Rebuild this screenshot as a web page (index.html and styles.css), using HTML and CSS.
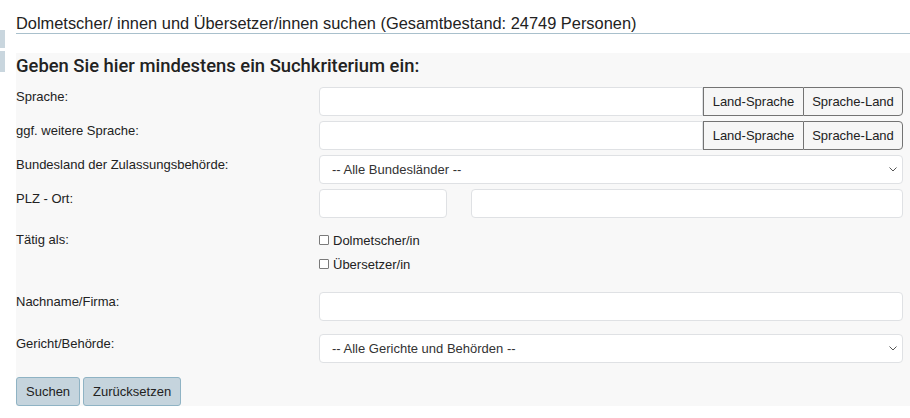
FILE: index.html
```html
<!DOCTYPE html>
<html lang="de">
<head>
<meta charset="utf-8">
<title>Dolmetscher/innen und Übersetzer/innen suchen</title>
<link rel="stylesheet" href="styles.css">
</head>
<body>
<div class="sidebar-stub" aria-hidden="true">
  <span class="stub stub-a"></span>
  <span class="stub stub-b"></span>
</div>
<header class="page-head">
  <h1 class="page-title">Dolmetscher/ innen und Übersetzer/innen suchen (Gesamtbestand: 24749 Personen)</h1>
</header>
<form class="search-panel">
  <h2 class="panel-title">Geben Sie hier mindestens ein Suchkriterium ein:</h2>

  <div class="row">
    <label class="row-label">Sprache:</label>
    <div class="input-group">
      <input class="field grow" type="text">
      <button type="button" class="btn-add">Land-Sprache</button>
      <button type="button" class="btn-add last">Sprache-Land</button>
    </div>
  </div>

  <div class="row">
    <label class="row-label">ggf. weitere Sprache:</label>
    <div class="input-group">
      <input class="field grow" type="text">
      <button type="button" class="btn-add">Land-Sprache</button>
      <button type="button" class="btn-add last">Sprache-Land</button>
    </div>
  </div>

  <div class="row">
    <label class="row-label">Bundesland der Zulassungsbehörde:</label>
    <div class="select-wrap">
      <select class="field select"><option>-- Alle Bundesländer --</option></select>
      <svg class="chev" viewBox="0 0 8 5" width="8" height="5"><path d="M0.5 0.5 L4 4 L7.5 0.5" fill="none" stroke="#555" stroke-width="1"/></svg>
    </div>
  </div>

  <div class="row row-plz">
    <label class="row-label">PLZ - Ort:</label>
    <div class="plz-group">
      <input class="field plz" type="text">
      <input class="field ort" type="text">
    </div>
  </div>

  <div class="row row-check">
    <span class="row-label check-label">Tätig als:</span>
    <div class="checks">
      <label class="check"><input type="checkbox" class="box"> Dolmetscher/in</label>
      <label class="check"><input type="checkbox" class="box"> Übersetzer/in</label>
    </div>
  </div>

  <div class="row row-wide">
    <label class="row-label">Nachname/Firma:</label>
    <input class="field" type="text">
  </div>

  <div class="row row-wide row-last">
    <label class="row-label">Gericht/Behörde:</label>
    <div class="select-wrap">
      <select class="field select"><option>-- Alle Gerichte und Behörden --</option></select>
      <svg class="chev" viewBox="0 0 8 5" width="8" height="5"><path d="M0.5 0.5 L4 4 L7.5 0.5" fill="none" stroke="#555" stroke-width="1"/></svg>
    </div>
  </div>

  <div class="actions">
    <button type="submit" class="btn-main">Suchen</button>
    <button type="reset" class="btn-main">Zurücksetzen</button>
  </div>
</form>
</body>
</html>
```

FILE: styles.css
```css
* { box-sizing: border-box; }

body {
  margin: 0;
  font-family: "Liberation Sans", Arial, sans-serif;
  color: #212529;
  background: #fff;
  position: relative;
}

.sidebar-stub {
  position: absolute;
  left: 0;
  top: 30px;
  width: 5px;
  display: flex;
  flex-direction: column;
  gap: 3px;
}
.stub { display: block; background: #c9d6de; }
.stub-a { height: 18px; }
.stub-b { height: 21px; }

.page-head {
  margin: 13px 0 0 16px;
  border-bottom: 1px solid #a9c0cc;
}
.page-title {
  margin: 0;
  font-size: 16.4px;
  font-weight: 400;
  line-height: 20px;
  color: #222;
}

.search-panel {
  margin: 19px 0 0 16px;
  background: #f8f8f8;
  padding: 0 7px 0 0;
}

.panel-title {
  margin: 0 0 8px;
  font-family: Roboto, "Liberation Sans", sans-serif;
  font-size: 18.4px;
  font-weight: 500;
  line-height: 26px;
  color: #222;
}

.row {
  display: grid;
  grid-template-columns: 303px 1fr;
  margin-bottom: 5px;
}
.row-label {
  font-size: 13px;
  line-height: 20px;
  color: #222;
}

.field {
  height: 29px;
  border: 1px solid #dfe1e4;
  border-radius: 4px;
  background: #fff;
  font-family: inherit;
  font-size: 13px;
  color: #333;
  padding: 0 12px;
  width: 100%;
  outline: none;
}

.input-group { display: flex; }
.input-group .grow {
  flex: 1;
  border-radius: 4px 0 0 4px;
}
.btn-add {
  width: 100px;
  height: 29px;
  border: 1px solid #737373;
  border-right: none;
  background: #f6f6f6;
  font-family: inherit;
  font-size: 13px;
  color: #222;
  padding: 0;
}
.btn-add.last {
  border-right: 1px solid #737373;
  border-radius: 0 4px 4px 0;
}

.select-wrap { position: relative; }
.select {
  appearance: none;
  -webkit-appearance: none;
}
.chev {
  position: absolute;
  right: 6px;
  top: 12px;
  pointer-events: none;
}

.row-plz { margin-bottom: 10px; }
.plz-group { display: flex; gap: 24px; }
.plz { width: 128px; flex: none; }
.ort { flex: 1; }

.row-check { margin-bottom: 16px; }
.check-label { line-height: 24px; }
.checks { display: flex; flex-direction: column; }
.check {
  display: flex;
  align-items: center;
  height: 24px;
  font-size: 13px;
  color: #222;
}
.box {
  appearance: none;
  -webkit-appearance: none;
  width: 10px;
  height: 10px;
  margin: 0 4px 0 0;
  border: 1px solid #7a7a7a;
  border-radius: 1px;
  background: #fff;
}

.row-wide { margin-bottom: 13px; }
.row-last { margin-bottom: 14px; }

.actions {
  display: flex;
  gap: 3px;
}
.btn-main {
  height: 29px;
  padding: 0 9px;
  background: #c5d4dd;
  border: 1px solid #8fb3c4;
  border-radius: 3px;
  font-family: inherit;
  font-size: 13px;
  color: #222;
}
```
